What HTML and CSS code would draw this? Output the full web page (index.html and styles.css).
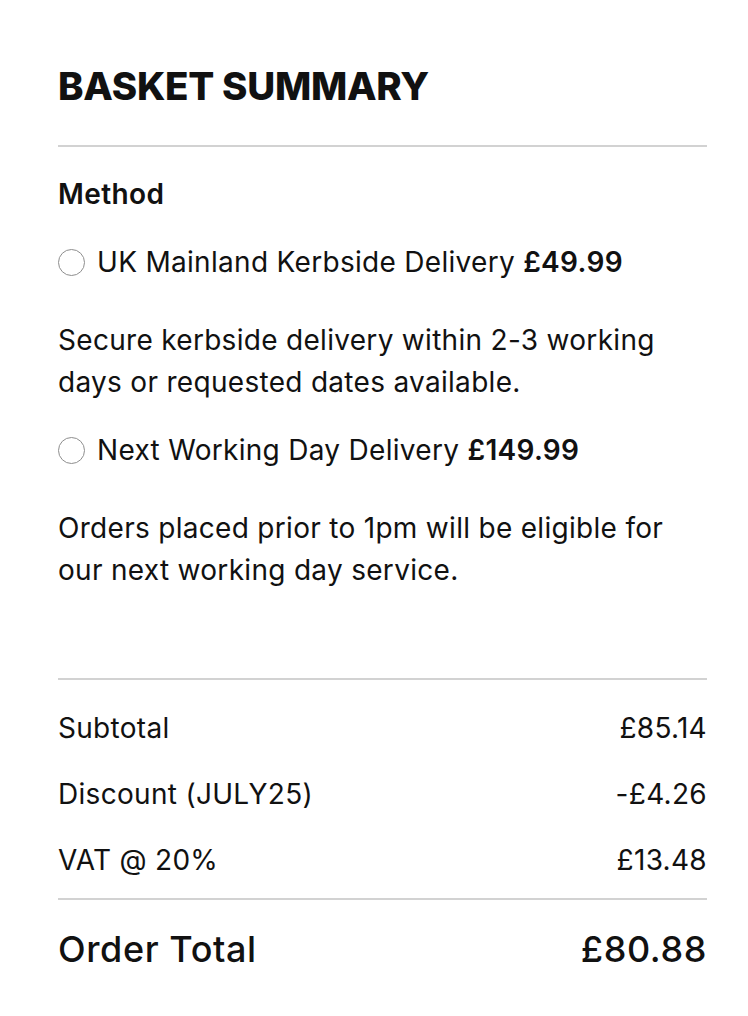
FILE: index.html
```html
<!DOCTYPE html>
<html lang="en">
<head>
  <meta charset="UTF-8">
  <meta name="viewport" content="width=device-width, initial-scale=1.0">
  <title>Basket Summary</title>
  <link rel="stylesheet" href="styles.css">
</head>
<body>

  <div class="summary">
    <h2 class="summary-title">BASKET SUMMARY</h2>
    <hr class="rule">

    <div class="method">
      <h3 class="method-title">Method</h3>

      <label class="option">
        <input type="radio" name="delivery" class="option-radio">
        <span>UK Mainland Kerbside Delivery <strong>£49.99</strong></span>
      </label>
      <p class="option-note">Secure kerbside delivery within 2-3 working days or requested dates available.</p>

      <label class="option">
        <input type="radio" name="delivery" class="option-radio">
        <span>Next Working Day Delivery <strong>£149.99</strong></span>
      </label>
      <p class="option-note">Orders placed prior to 1pm will be eligible for our next working day service.</p>
    </div>

    <hr class="rule">

    <div class="totals">
      <div class="totals-row"><span>Subtotal</span><span>£85.14</span></div>
      <div class="totals-row"><span>Discount (JULY25)</span><span>-£4.26</span></div>
      <div class="totals-row"><span>VAT @ 20%</span><span>£13.48</span></div>
    </div>

    <hr class="rule">

    <div class="grand-total"><span>Order Total</span><span>£80.88</span></div>
  </div>

</body>
</html>
```

FILE: styles.css
```css
body {
  margin: 0;
  background-color: #fff;
  color: #111;
  font-family: Inter, "Open Sans", Arial, sans-serif;
}
.summary {
  padding: 62px 41px 40px 58px;
}
.summary-title {
  margin: 0;
  font-size: 38.5px;
  line-height: 48px;
  font-weight: 800;
  letter-spacing: -0.3px;
}
.rule {
  margin: 0;
  border: none;
  border-top: 2px solid #d2d2d2;
}
.summary-title + .rule {
  margin-top: 35px;
}
.method {
  padding: 26px 0 87px;
}
.method-title {
  margin: 0 0 26px;
  font-size: 28px;
  line-height: 42px;
  font-weight: 600;
  letter-spacing: 0.4px;
}
.option,
.option-note,
.totals-row {
  font-size: 28px;
  line-height: 42px;
  letter-spacing: 0.3px;
}
.option {
  display: flex;
  align-items: center;
  gap: 12px;
}
.option strong {
  font-weight: 600;
}
.option-radio {
  appearance: none;
  margin: 0;
  width: 27px;
  height: 27px;
  border: 1.5px solid #8e8e8e;
  border-radius: 50%;
  flex-shrink: 0;
}
.option-note {
  margin: 36px 0 26px;
}
.option-note:last-child {
  margin-bottom: 0;
}
.totals {
  display: flex;
  flex-direction: column;
  gap: 24px;
  padding: 27px 0 17px;
}
.totals-row,
.grand-total {
  display: flex;
  justify-content: space-between;
}
.grand-total {
  margin-top: 25px;
  font-size: 36px;
  line-height: 48px;
  font-weight: 500;
  letter-spacing: 0.6px;
}
```
